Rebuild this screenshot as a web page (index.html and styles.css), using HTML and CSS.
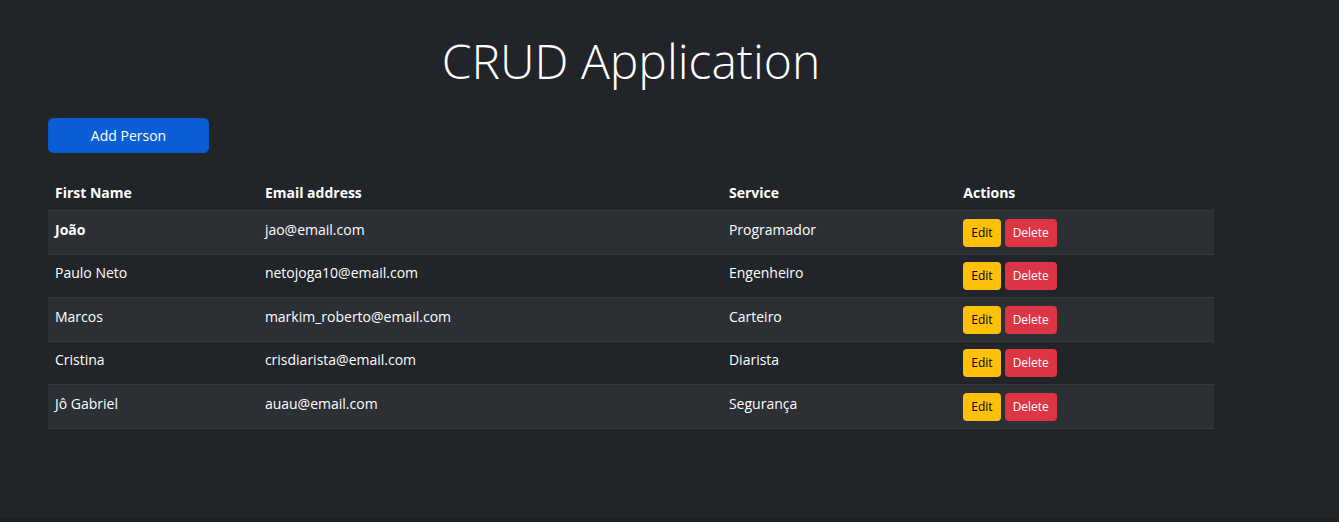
FILE: index.html
```html
<!DOCTYPE html>
<html lang="en">
<head>
<meta charset="utf-8">
<title>CRUD Application</title>
<link rel="stylesheet" href="styles.css">
</head>
<body>
<main class="page">
  <h1 class="title">CRUD Application</h1>
  <button type="button" class="btn btn-primary">Add Person</button>
  <table class="people">
    <colgroup><col class="col-name"><col class="col-email"><col class="col-service"><col class="col-actions"></colgroup>
    <thead>
      <tr><th scope="col">First Name</th><th scope="col">Email address</th><th scope="col">Service</th><th scope="col">Actions</th></tr>
    </thead>
    <tbody>
      <tr><th scope="row">João</th><td>jao@email.com</td><td>Programador</td><td><div class="actions"><button type="button" class="btn btn-edit">Edit</button><button type="button" class="btn btn-delete">Delete</button></div></td></tr>
      <tr><td>Paulo Neto</td><td>netojoga10@email.com</td><td>Engenheiro</td><td><div class="actions"><button type="button" class="btn btn-edit">Edit</button><button type="button" class="btn btn-delete">Delete</button></div></td></tr>
      <tr><td>Marcos</td><td>markim_roberto@email.com</td><td>Carteiro</td><td><div class="actions"><button type="button" class="btn btn-edit">Edit</button><button type="button" class="btn btn-delete">Delete</button></div></td></tr>
      <tr><td>Cristina</td><td>crisdiarista@email.com</td><td>Diarista</td><td><div class="actions"><button type="button" class="btn btn-edit">Edit</button><button type="button" class="btn btn-delete">Delete</button></div></td></tr>
      <tr><td>Jô Gabriel</td><td>auau@email.com</td><td>Segurança</td><td><div class="actions"><button type="button" class="btn btn-edit">Edit</button><button type="button" class="btn btn-delete">Delete</button></div></td></tr>
    </tbody>
  </table>
</main>
</body>
</html>
```
FILE: styles.css
```css
* { box-sizing: border-box; }

body {
  margin: 0;
  min-height: 100vh;
  background: #212529;
  color: #fff;
  font-family: "Segoe UI", "Open Sans", "Noto Sans", sans-serif;
  font-size: 14px;
  line-height: 20px;
  border-bottom: 4px solid #211e26;
}

.page { padding: 32px 125px 32px 48px; }

.title {
  margin: 0 0 28px;
  font-size: 48px;
  font-weight: 300;
  line-height: 58px;
  text-align: center;
}

.btn {
  border: 0;
  border-radius: 4px;
  font: inherit;
  cursor: pointer;
}

.btn-primary {
  width: 161px;
  height: 35px;
  border: 1px solid #0a58ca;
  border-radius: 5px;
  background: #0b5ed7;
  color: #fff;
}

.people {
  width: 100%;
  margin-top: 22px;
  border-collapse: separate;
  border-spacing: 0;
  table-layout: fixed;
}

.col-name { width: 18%; }
.col-email { width: 39.8%; }
.col-service { width: 20.1%; }

.people th,
.people td {
  padding: 8px 7px 7px;
  border-bottom: 1px solid #373b3e;
  text-align: left;
  vertical-align: top;
}

.people tbody { line-height: 22px; }
.people tbody tr:nth-child(odd) { background: #2c3034; }
.people tbody tr:nth-child(even) td { padding: 7px; }

.actions { display: flex; gap: 4px; }
.actions .btn { height: 28px; padding: 0 8px; font-size: 12px; }
.btn-edit { background: #ffc107; color: #000; }
.btn-delete { background: #dc3545; color: #fff; }
```
